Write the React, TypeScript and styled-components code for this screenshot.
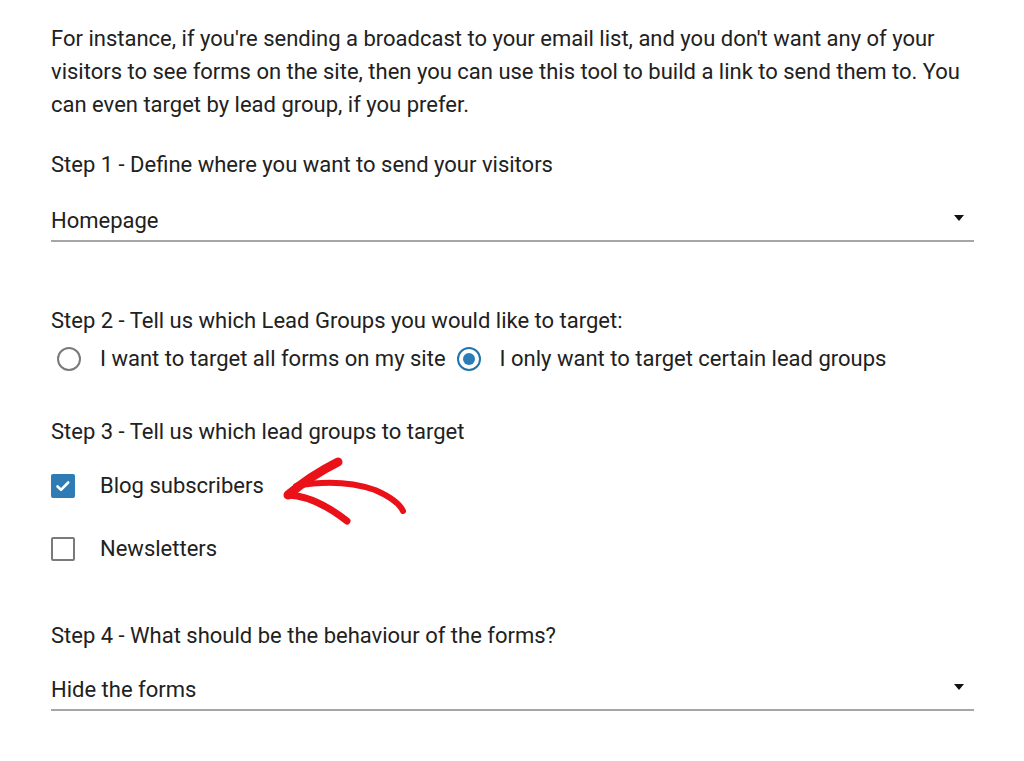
import React from 'react';
import styled, { createGlobalStyle } from 'styled-components';

const GlobalStyle = createGlobalStyle`
  body {
    margin: 0;
    background: #ffffff;
    font-family: Roboto, "Liberation Sans", Arial, sans-serif;
    color: #212121;
  }
`

const Page = styled.div`
  width: 923px;
  padding: 22px 0 40px 51px;
  font-size: 22px;
  line-height: 33px;
`

const Intro = styled.p`
  margin: 0;
`

const StepLabel = styled.div<{ $gap: number }>`
  margin-top: ${p => p.$gap}px;
`

const Select = styled.div<{ $gap: number }>`
  margin-top: ${p => p.$gap}px;
  height: 39px;
  display: flex;
  align-items: center;
  justify-content: space-between;
  border-bottom: 2px solid #a6a6a6;
`

const Caret = styled.span`
  width: 0;
  height: 0;
  margin-right: 10px;
  margin-top: -6px;
  border-left: 5px solid transparent;
  border-right: 5px solid transparent;
  border-top: 6px solid #111111;
`

const RadioRow = styled.div`
  margin-top: 5px;
  display: flex;
  align-items: center;
`

const RadioOption = styled.label`
  display: flex;
  align-items: center;
  margin-right: 5px;
`

const RadioCircle = styled.span<{ $checked?: boolean }>`
  box-sizing: border-box;
  width: 24px;
  height: 24px;
  margin: 0 19px 0 6px;
  border-radius: 50%;
  border: 2px solid ${p => (p.$checked ? '#2275ac' : '#7a7a7a')};
  display: flex;
  align-items: center;
  justify-content: center;

  &::after {
    content: '';
    display: ${p => (p.$checked ? 'block' : 'none')};
    width: 12px;
    height: 12px;
    border-radius: 50%;
    background: #2a7db6;
  }
`

const CheckRow = styled.label<{ $gap: number }>`
  margin-top: ${p => p.$gap}px;
  display: flex;
  align-items: center;
  position: relative;
`

const CheckBox = styled.span<{ $checked?: boolean }>`
  box-sizing: border-box;
  width: 24px;
  height: 24px;
  margin-right: 25px;
  border-radius: 2px;
  border: 2px solid ${p => (p.$checked ? '#2f7bb5' : '#7a7a7a')};
  background: ${p => (p.$checked ? '#2f7bb5' : '#ffffff')};
  display: flex;
  align-items: center;
  justify-content: center;
`

const Annotation = styled.svg`
  position: absolute;
  left: 179px;
  top: -11px;
  overflow: visible;
`

export default function App() {
  return (
    <>
      <GlobalStyle />
      <Page>
        <Intro>
          For instance, if you're sending a broadcast to your email list, and you don't want any of your
          visitors to see forms on the site, then you can use this tool to build a link to send them to. You
          can even target by lead group, if you prefer.
        </Intro>

        <StepLabel $gap={27}>Step 1 - Define where you want to send your visitors</StepLabel>
        <Select $gap={20}>
          <span>Homepage</span>
          <Caret />
        </Select>

        <StepLabel $gap={62}>Step 2 - Tell us which Lead Groups you would like to target:</StepLabel>
        <RadioRow>
          <RadioOption>
            <RadioCircle />
            I want to target all forms on my site
          </RadioOption>
          <RadioOption>
            <RadioCircle $checked />
            I only want to target certain lead groups
          </RadioOption>
        </RadioRow>

        <StepLabel $gap={40}>Step 3 - Tell us which lead groups to target</StepLabel>
        <CheckRow $gap={21}>
          <CheckBox $checked>
            <svg width="20" height="20" viewBox="0 0 20 20">
              <path d="M4.5 10.5 L8 13.8 L15.2 6.5" fill="none" stroke="#fff" strokeWidth="2.6" strokeLinecap="round" strokeLinejoin="round" />
            </svg>
          </CheckBox>
          Blog subscribers
          <Annotation width="130" height="80" viewBox="0 0 130 80">
            <g fill="none" stroke="#ea1119" strokeLinecap="round" strokeLinejoin="round">
              <path d="M108 4 Q80 18 58 37" strokeWidth="9" />
              <path d="M58 37 Q85 38 117 63" strokeWidth="7" />
              <path d="M66 28 Q110 20 145 32 Q168 42 173 53" strokeWidth="6" />
            </g>
          </Annotation>
        </CheckRow>
        <CheckRow $gap={30}>
          <CheckBox />
          Newsletters
        </CheckRow>

        <StepLabel $gap={54}>Step 4 - What should be the behaviour of the forms?</StepLabel>
        <Select $gap={18}>
          <span>Hide the forms</span>
          <Caret />
        </Select>
      </Page>
    </>
  );
}
